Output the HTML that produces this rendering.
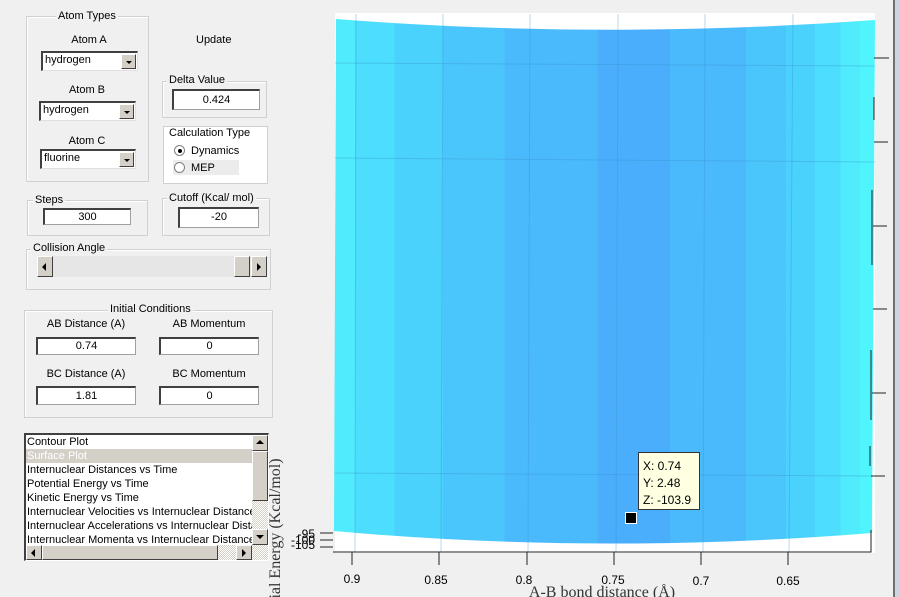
<!DOCTYPE html>
<html><head><meta charset="utf-8"><style>
*{box-sizing:border-box;margin:0;padding:0}
body{width:900px;height:597px;overflow:hidden;background:#f0f0f0;font-family:"Liberation Sans",sans-serif;font-size:11px;color:#000;position:relative}
.a{position:absolute}
.g{position:absolute;border:1px solid #d0d0d0;box-shadow:inset 1px 1px 0 #fff}
.gt{position:absolute;background:#f0f0f0;padding:0 2px;white-space:nowrap}
.in{position:absolute;background:#fff;border:1px solid #a0a0a0;border-top:2px solid #404040;border-left:2px solid #404040;text-align:center;line-height:14px}
.cb{position:absolute;background:#fff;border-top:2px solid #404040;border-left:2px solid #404040;border-right:1px solid #e0e0e0;border-bottom:1px solid #e0e0e0;line-height:15px;padding-left:2px}
.cb i{position:absolute;right:1px;top:1px;width:15px;height:15px;background:#d4d0c8;border:1px solid #fff;border-right-color:#404040;border-bottom-color:#404040}
.cb i:after{content:"";position:absolute;left:4px;top:6px;border:3px solid transparent;border-top:3px solid #000}
.btn{position:absolute;background:#d4d0c8;border:1px solid #fff;border-right-color:#404040;border-bottom-color:#404040}
.c{text-align:center}
</style></head><body>
<div class="g" style="left:26px;top:16px;width:123px;height:166px"></div>
<div class="gt" style="left:56px;top:10px">Atom Types</div>
<div class="a c" style="left:40px;top:34px;width:98px">Atom A</div>
<div class="cb" style="left:41px;top:51px;width:97px;height:20px">hydrogen<i></i></div>
<div class="a c" style="left:38px;top:84px;width:98px">Atom B</div>
<div class="cb" style="left:39px;top:101px;width:97px;height:20px">hydrogen<i></i></div>
<div class="a c" style="left:38px;top:135px;width:98px">Atom C</div>
<div class="cb" style="left:40px;top:149px;width:96px;height:20px">fluorine<i></i></div>
<div class="a" style="left:196px;top:34px">Update</div>
<div class="g" style="left:162px;top:81px;width:105px;height:37px"></div>
<div class="gt" style="left:167px;top:74px">Delta Value</div>
<div class="in" style="left:172px;top:89px;width:88px;height:21px;line-height:18px">0.424</div>
<div class="a" style="left:163px;top:126px;width:105px;height:58px;background:#fff;border:1px solid #d0d0d0"></div>
<div class="a" style="left:167px;top:127px;background:#fff;padding:0 2px">Calculation Type</div>
<div class="a" style="left:173px;top:160px;width:66px;height:15px;background:#ececec"></div>
<div class="a" style="left:174px;top:145px;width:11px;height:11px;border-radius:50%;border:1px solid #808080;background:#fff"></div>
<div class="a" style="left:178px;top:149px;width:4px;height:4px;border-radius:50%;background:#000"></div>
<div class="a" style="left:191px;top:145px">Dynamics</div>
<div class="a" style="left:174px;top:162px;width:11px;height:11px;border-radius:50%;border:1px solid #808080;background:#fff"></div>
<div class="a" style="left:191px;top:162px">MEP</div>
<div class="g" style="left:27px;top:200px;width:121px;height:36px"></div>
<div class="gt" style="left:33px;top:194px">Steps</div>
<div class="in" style="left:43px;top:208px;width:88px;height:17px">300</div>
<div class="g" style="left:162px;top:198px;width:108px;height:38px"></div>
<div class="gt" style="left:167px;top:192px">Cutoff (Kcal/ mol)</div>
<div class="in" style="left:178px;top:207px;width:81px;height:21px;line-height:17px">-20</div>
<div class="g" style="left:26px;top:249px;width:245px;height:41px"></div>
<div class="gt" style="left:31px;top:242px">Collision Angle</div>
<div class="a" style="left:37px;top:256px;width:230px;height:21px;background:#e6e6e6"></div>
<div class="btn" style="left:37px;top:256px;width:16px;height:21px"></div>
<div class="a" style="left:42px;top:263px;border:4px solid transparent;border-right:4px solid #000;border-left:0"></div>
<div class="btn" style="left:234px;top:256px;width:16px;height:21px"></div>
<div class="btn" style="left:251px;top:256px;width:16px;height:21px"></div>
<div class="a" style="left:257px;top:263px;border:4px solid transparent;border-left:4px solid #000;border-right:0"></div>
<div class="g" style="left:24px;top:310px;width:249px;height:108px"></div>
<div class="gt" style="left:108px;top:303px">Initial Conditions</div>
<div class="a c" style="left:36px;top:318px;width:100px">AB Distance (A)</div>
<div class="a c" style="left:159px;top:318px;width:100px">AB Momentum</div>
<div class="in" style="left:36px;top:337px;width:100px;height:18px">0.74</div>
<div class="in" style="left:159px;top:337px;width:100px;height:18px">0</div>
<div class="a c" style="left:36px;top:368px;width:100px">BC Distance (A)</div>
<div class="a c" style="left:159px;top:368px;width:100px">BC Momentum</div>
<div class="in" style="left:36px;top:386px;width:100px;height:19px;line-height:16px">1.81</div>
<div class="in" style="left:159px;top:386px;width:100px;height:19px;line-height:16px">0</div>
<div class="a" style="left:24px;top:433px;width:245px;height:128px;background:#fff;border-top:2px solid #404040;border-left:2px solid #404040;border-right:1px solid #fff;border-bottom:1px solid #fff;overflow:hidden;line-height:14px">
<div style="padding-left:1px">Contour Plot</div>
<div style="padding-left:1px;background:#d4d0c8;color:#fff;width:226px">Surface Plot</div>
<div style="padding-left:1px;white-space:nowrap">Internuclear Distances vs Time</div>
<div style="padding-left:1px">Potential Energy vs Time</div>
<div style="padding-left:1px">Kinetic Energy vs Time</div>
<div style="padding-left:1px;white-space:nowrap;width:226px;overflow:hidden">Internuclear Velocities vs Internuclear Distance</div>
<div style="padding-left:1px;white-space:nowrap;width:226px;overflow:hidden">Internuclear Accelerations vs Internuclear Distance</div>
<div style="padding-left:1px;white-space:nowrap;width:226px;overflow:hidden">Internuclear Momenta vs Internuclear Distance</div>
</div>
<div class="a" style="left:252px;top:435px;width:16px;height:110px;background:repeating-conic-gradient(#fff 0 25%,#d4d0c8 0 50%) 0 0/2px 2px"></div>
<div class="btn" style="left:252px;top:435px;width:16px;height:16px"></div>
<div class="a" style="left:256px;top:440px;border:4px solid transparent;border-bottom:4px solid #000;border-top:0"></div>
<div class="btn" style="left:252px;top:451px;width:16px;height:50px"></div>
<div class="btn" style="left:252px;top:529px;width:16px;height:16px"></div>
<div class="a" style="left:256px;top:535px;border:4px solid transparent;border-top:4px solid #000;border-bottom:0"></div>
<div class="a" style="left:26px;top:545px;width:242px;height:15px;background:repeating-conic-gradient(#fff 0 25%,#d4d0c8 0 50%) 0 0/2px 2px"></div>
<div class="btn" style="left:26px;top:545px;width:16px;height:15px"></div>
<div class="a" style="left:31px;top:549px;border:4px solid transparent;border-right:4px solid #000;border-left:0"></div>
<div class="btn" style="left:42px;top:545px;width:176px;height:15px"></div>
<div class="btn" style="left:236px;top:545px;width:16px;height:15px"></div>
<div class="a" style="left:242px;top:549px;border:4px solid transparent;border-left:4px solid #000;border-right:0"></div>
<svg class="a" style="left:0;top:0" width="900" height="597">
<defs><linearGradient id="bg" x1="335" x2="876" gradientUnits="userSpaceOnUse">
<stop offset="0" stop-color="#50ebfc"/><stop offset=".037" stop-color="#50ebfc"/><stop offset=".037" stop-color="#4cdefc"/><stop offset=".11" stop-color="#4cdefc"/><stop offset=".11" stop-color="#4bd2fc"/><stop offset=".2" stop-color="#4bd2fc"/><stop offset=".2" stop-color="#4ac6fc"/><stop offset=".313" stop-color="#4ac6fc"/><stop offset=".313" stop-color="#4bbafc"/><stop offset=".485" stop-color="#4bbafc"/><stop offset=".485" stop-color="#4aaefc"/><stop offset=".619" stop-color="#4aaefc"/><stop offset=".619" stop-color="#4bbafc"/><stop offset=".76" stop-color="#4bbafc"/><stop offset=".76" stop-color="#4ac6fc"/><stop offset=".834" stop-color="#4ac6fc"/><stop offset=".834" stop-color="#4bd2fc"/><stop offset=".887" stop-color="#4bd2fc"/><stop offset=".887" stop-color="#4cdefc"/><stop offset=".934" stop-color="#4cdefc"/><stop offset=".934" stop-color="#50ebfc"/><stop offset=".97" stop-color="#50ebfc"/><stop offset=".97" stop-color="#50f4fc"/><stop offset="1" stop-color="#50f4fc"/></linearGradient></defs>
<rect x="335" y="13" width="540" height="540" fill="#fff"/>
<path d="M336 19 Q605 40 875 20 L872 533 Q600 555 334 531 Z" fill="url(#bg)"/>
<g stroke="#3a8ec8" stroke-opacity=".35" stroke-width="1" fill="none">
<line x1="356" y1="14" x2="355" y2="552"/><line x1="443" y1="14" x2="441" y2="552"/><line x1="530" y1="14" x2="528" y2="552"/><line x1="618" y1="14" x2="616" y2="552"/><line x1="705" y1="14" x2="703" y2="552"/><line x1="793" y1="14" x2="789" y2="552"/>
<line x1="335" y1="63" x2="875" y2="66"/><line x1="335" y1="158" x2="875" y2="162"/><line x1="335" y1="473" x2="872" y2="476"/>
</g>
<path d="M333 552 L871 552 L871 530" stroke="#222" fill="none"/>
<path d="M874 97 V120 M872 190 V265 M871 350 V420 M870 446 V466" stroke="#222"/>
<g stroke="#222"><line x1="874" y1="58" x2="889" y2="58"/><line x1="874" y1="142" x2="888" y2="142"/><line x1="873" y1="226" x2="887" y2="226"/><line x1="873" y1="309" x2="887" y2="309"/><line x1="872" y1="393" x2="886" y2="393"/><line x1="871" y1="476" x2="885" y2="476"/>
<line x1="352" y1="552" x2="352" y2="565"/><line x1="439" y1="552" x2="439" y2="565"/><line x1="527" y1="552" x2="527" y2="565"/><line x1="614" y1="552" x2="614" y2="565"/><line x1="701" y1="552" x2="701" y2="565"/><line x1="788" y1="552" x2="788" y2="565"/>
<line x1="320" y1="533" x2="333" y2="533"/><line x1="320" y1="540" x2="333" y2="540"/><line x1="320" y1="547" x2="333" y2="547"/></g>
<rect x="893" y="0" width="2" height="597" fill="#707070"/><rect x="895" y="0" width="5" height="597" fill="#cdd5e3"/>
<g font-family="Liberation Sans" font-size="12" text-anchor="middle"><text x="352" y="583">0.9</text><text x="436" y="584">0.85</text><text x="524" y="584">0.8</text><text x="613" y="584">0.75</text><text x="701" y="585">0.7</text><text x="788" y="585">0.65</text></g>
<g font-family="Liberation Sans" font-size="12" text-anchor="end"><text x="315" y="538">-95</text><text x="315" y="544">-100</text><text x="315" y="549">-105</text></g>
<text x="602" y="597" font-family="Liberation Serif" font-size="16" text-anchor="middle" fill="#333">A-B bond distance (Å)</text>
<text transform="translate(280,603) rotate(-90)" font-family="Liberation Serif" font-size="16" fill="#333">tial Energy (Kcal/mol)</text>
<rect x="638.5" y="452.5" width="61" height="57" fill="#ffffe1" stroke="#333"/>
<g font-family="Liberation Sans" font-size="12"><text x="643" y="470">X: 0.74</text><text x="643" y="487">Y: 2.48</text><text x="643" y="504">Z: -103.9</text></g>
<rect x="625.5" y="512.5" width="11" height="11" fill="#000" stroke="#fff"/>
</svg>
</body></html>
